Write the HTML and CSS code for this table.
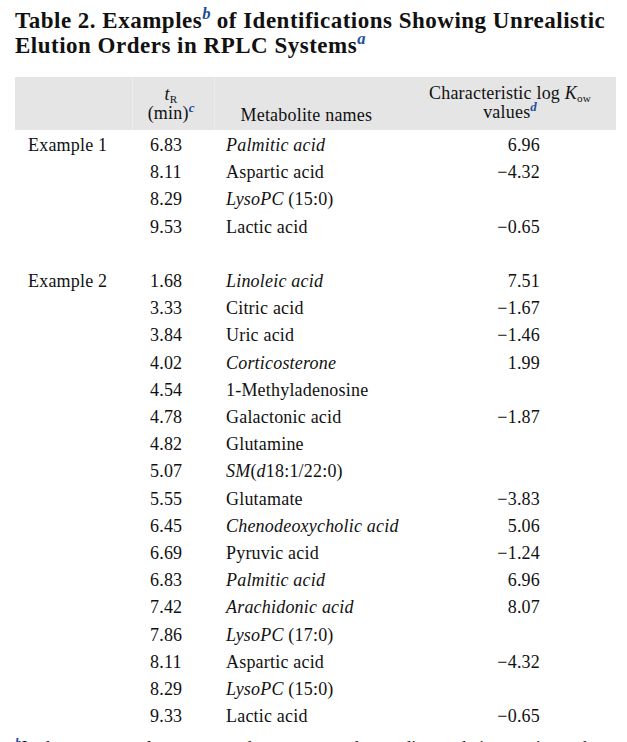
FILE: index.html
```html
<!DOCTYPE html>
<html>
<head>
<meta charset="utf-8">
<link rel="stylesheet" href="styles.css">
</head>
<body>
<h1 class="title">Table 2. Examples<sup class="fn">b</sup> of Identifications Showing Unrealistic Elution Orders in RPLC Systems<sup class="fn">a</sup></h1>
<table class="tbl">
  <colgroup>
    <col class="w1"><col class="w2"><col class="w3"><col class="w4">
  </colgroup>
  <thead>
    <tr>
      <th class="c1"></th>
      <th class="c2"><span class="tr"><i>t</i><sub>R</sub></span><br>(min)<sup class="fn">c</sup></th>
      <th class="c3">Metabolite names</th>
      <th class="c4">Characteristic log <i>K</i><sub>ow</sub><br>values<sup class="fn">d</sup></th>
    </tr>
  </thead>
  <tbody>
    <tr class="first"><td class="c1">Example 1</td><td class="c2">6.83</td><td class="c3"><i>Palmitic acid</i></td><td class="c4">6.96</td></tr>
    <tr><td class="c1"></td><td class="c2">8.11</td><td class="c3">Aspartic acid</td><td class="c4">−4.32</td></tr>
    <tr><td class="c1"></td><td class="c2">8.29</td><td class="c3"><i>LysoPC</i> (15:0)</td><td class="c4"></td></tr>
    <tr><td class="c1"></td><td class="c2">9.53</td><td class="c3">Lactic acid</td><td class="c4">−0.65</td></tr>
    <tr><td class="c1"></td><td class="c2"></td><td class="c3"></td><td class="c4"></td></tr>
    <tr><td class="c1">Example 2</td><td class="c2">1.68</td><td class="c3"><i>Linoleic acid</i></td><td class="c4">7.51</td></tr>
    <tr><td class="c1"></td><td class="c2">3.33</td><td class="c3">Citric acid</td><td class="c4">−1.67</td></tr>
    <tr><td class="c1"></td><td class="c2">3.84</td><td class="c3">Uric acid</td><td class="c4">−1.46</td></tr>
    <tr><td class="c1"></td><td class="c2">4.02</td><td class="c3"><i>Corticosterone</i></td><td class="c4">1.99</td></tr>
    <tr><td class="c1"></td><td class="c2">4.54</td><td class="c3">1-Methyladenosine</td><td class="c4"></td></tr>
    <tr><td class="c1"></td><td class="c2">4.78</td><td class="c3">Galactonic acid</td><td class="c4">−1.87</td></tr>
    <tr><td class="c1"></td><td class="c2">4.82</td><td class="c3">Glutamine</td><td class="c4"></td></tr>
    <tr><td class="c1"></td><td class="c2">5.07</td><td class="c3"><i>SM</i>(<i>d</i>18:1/22:0)</td><td class="c4"></td></tr>
    <tr><td class="c1"></td><td class="c2">5.55</td><td class="c3">Glutamate</td><td class="c4">−3.83</td></tr>
    <tr><td class="c1"></td><td class="c2">6.45</td><td class="c3"><i>Chenodeoxycholic acid</i></td><td class="c4">5.06</td></tr>
    <tr><td class="c1"></td><td class="c2">6.69</td><td class="c3">Pyruvic acid</td><td class="c4">−1.24</td></tr>
    <tr><td class="c1"></td><td class="c2">6.83</td><td class="c3"><i>Palmitic acid</i></td><td class="c4">6.96</td></tr>
    <tr><td class="c1"></td><td class="c2">7.42</td><td class="c3"><i>Arachidonic acid</i></td><td class="c4">8.07</td></tr>
    <tr><td class="c1"></td><td class="c2">7.86</td><td class="c3"><i>LysoPC</i> (17:0)</td><td class="c4"></td></tr>
    <tr><td class="c1"></td><td class="c2">8.11</td><td class="c3">Aspartic acid</td><td class="c4">−4.32</td></tr>
    <tr><td class="c1"></td><td class="c2">8.29</td><td class="c3"><i>LysoPC</i> (15:0)</td><td class="c4"></td></tr>
    <tr><td class="c1"></td><td class="c2">9.33</td><td class="c3">Lactic acid</td><td class="c4">−0.65</td></tr>
  </tbody>
</table>
<p class="foot"><sup class="fn">b</sup>In the two examples, compounds are presented according to their retention order.</p>
</body>
</html>
```
FILE: styles.css
```css
html, body {
  margin: 0;
  padding: 0;
  background: #ffffff;
}
body {
  font-family: "Liberation Serif", "DejaVu Serif", serif;
  color: #111111;
  width: 627px;
  height: 742px;
  overflow: hidden;
}
.title {
  margin: 0;
  padding: 8px 8px 0 15px;
  font-size: 23px;
  line-height: 25px;
  font-weight: bold;
  letter-spacing: 0.5px;
}
.fn {
  color: #1f4e99;
  font-style: italic;
  font-weight: bold;
  font-size: 0.72em;
  vertical-align: 0.55em;
  line-height: 0;
  letter-spacing: 0;
}
.tbl {
  margin: 19px 0 0 15px;
  width: 601px;
  table-layout: fixed;
  border-collapse: collapse;
  font-size: 18px;
  letter-spacing: 0.2px;
}
.w1 { width: 117px; }
.w2 { width: 82px; }
.w3 { width: 200px; }
.w4 { width: 202px; }
.tbl th {
  background: #e5e5e5;
  font-weight: normal;
  vertical-align: bottom;
  height: 53px;
  padding: 0 0 7px 0;
  line-height: 19px;
  white-space: nowrap;
  box-sizing: border-box;
}
.tbl th.c2, .tbl th.c3 {
  border-left: 1px solid #ececec;
}
.tbl sub {
  font-size: 0.62em;
  vertical-align: -0.25em;
  line-height: 0;
}
.tbl td {
  padding: 0;
  height: 27.2px;
  line-height: 27.2px;
  white-space: nowrap;
}
.tbl tr.first td {
  padding-top: 2px;
}
.tbl td.c1 { padding-left: 13px; }
.tbl td.c2 { padding-left: 18px; }
.tbl td.c3 { padding-left: 12px; }
.tbl td.c4 { text-align: right; padding-right: 76px; }
.tbl th.c2 { text-align: center; padding-right: 4px; }
.tbl th.c3 { text-align: left; padding-left: 26px; padding-bottom: 5px; }
.tbl th.c4 { text-align: center; padding-right: 10px; padding-bottom: 8px; }
.tr { display: inline-block; margin-bottom: -2px; }
.foot {
  margin: 7px 0 0 15px;
  font-size: 18px;
  line-height: 22px;
}
```
